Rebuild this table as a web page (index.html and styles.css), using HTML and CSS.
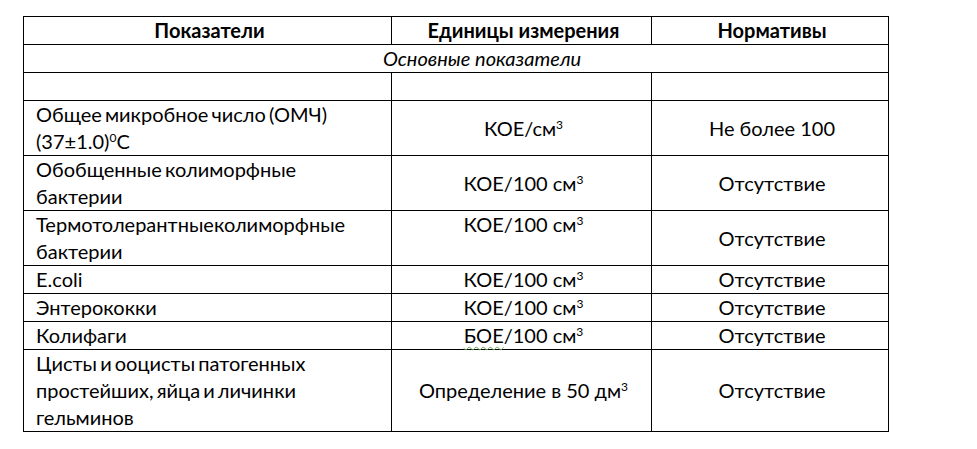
FILE: index.html
```html
<!DOCTYPE html>
<html lang="ru">
<head>
<meta charset="utf-8">
<title>Показатели</title>
<link rel="stylesheet" href="styles.css">
</head>
<body>
<table class="norms">
  <colgroup>
    <col class="c1"><col class="c2"><col class="c3">
  </colgroup>
  <tr class="h1">
    <th>Показатели</th><th>Единицы измерения</th><th>Нормативы</th>
  </tr>
  <tr class="h1">
    <td colspan="3" class="section">Основные показатели</td>
  </tr>
  <tr class="h1">
    <td></td><td></td><td></td>
  </tr>
  <tr class="h2">
    <td class="name">Общее микробное число (ОМЧ) (37±1.0)<sup>0</sup>С</td>
    <td class="mid">КОЕ/см<sup>3</sup></td>
    <td class="mid">Не более 100</td>
  </tr>
  <tr class="h2b">
    <td class="name">Обобщенные колиморфные бактерии</td>
    <td class="mid">КОЕ/100 см<sup>3</sup></td>
    <td class="mid">Отсутствие</td>
  </tr>
  <tr class="h2">
    <td class="name">Термотолерантныеколиморфные бактерии</td>
    <td class="mid top">КОЕ/100 см<sup>3</sup></td>
    <td class="mid">Отсутствие</td>
  </tr>
  <tr class="h1">
    <td class="name">E.coli</td>
    <td class="mid">КОЕ/100 см<sup>3</sup></td>
    <td class="mid">Отсутствие</td>
  </tr>
  <tr class="h1">
    <td class="name">Энтерококки</td>
    <td class="mid">КОЕ/100 см<sup>3</sup></td>
    <td class="mid">Отсутствие</td>
  </tr>
  <tr class="h1">
    <td class="name">Колифаги</td>
    <td class="mid"><span class="spell">БОЕ</span>/100 см<sup>3</sup></td>
    <td class="mid">Отсутствие</td>
  </tr>
  <tr class="h3">
    <td class="name">Цисты и ооцисты патогенных простейших, яйца и личинки гельминов</td>
    <td class="mid">Определение в 50 дм<sup>3</sup></td>
    <td class="mid">Отсутствие</td>
  </tr>
</table>
</body>
</html>
```
FILE: styles.css
```css
html, body {
  margin: 0;
  padding: 0;
  background: #ffffff;
}
body {
  font-family: "Lato", "Open Sans", sans-serif;
  font-size: 20px;
  color: #000000;
}
.norms {
  margin: 16px 0 0 23px;
  border-collapse: collapse;
  table-layout: fixed;
  width: 865px;
}
.c1 { width: 368px; }
.c2 { width: 260px; }
.c3 { width: 237px; }
.norms th,
.norms td {
  border: 1.5px solid #000000;
  padding: 0 8px 0 12px;
  line-height: 27px;
  vertical-align: middle;
}
.norms th {
  font-weight: bold;
  text-align: center;
}
.h1 { height: 28px; }
.h2 { height: 55px; }
.h2b { height: 54px; }
.h3 { height: 81px; }
.norms td.section {
  font-style: italic;
  text-align: center;
  padding-left: 60px;
}
.norms td.name {
  text-align: left;
  vertical-align: top;
  word-spacing: -2px;
}
.norms td.mid {
  text-align: center;
}
.norms td.top {
  vertical-align: top;
}
sup {
  font-size: 12px;
  line-height: 0;
  vertical-align: 7px;
}
.spell {
  text-decoration: underline wavy #6aa84f;
  text-decoration-thickness: 1px;
  text-underline-offset: 3px;
}
```
